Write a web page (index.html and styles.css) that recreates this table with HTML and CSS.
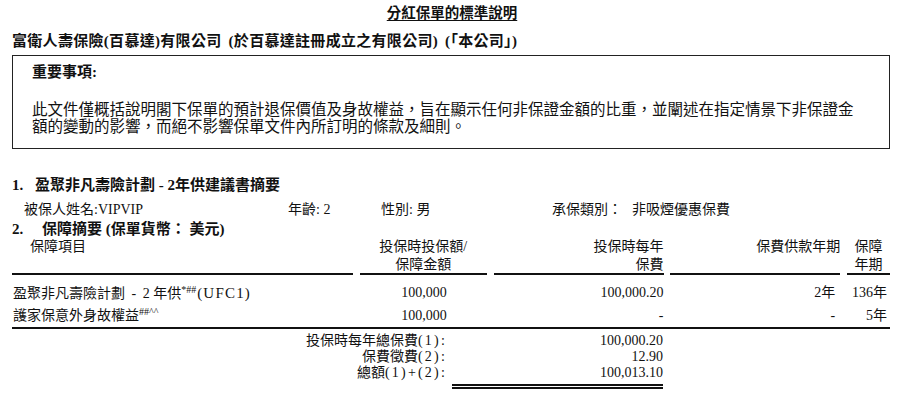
FILE: index.html
```html
<!DOCTYPE html>
<html lang="zh-Hant">
<head>
<meta charset="utf-8">
<link rel="stylesheet" href="styles.css">
</head>
<body>
<div class="page">
  <div class="title"><span class="title-text">分紅保單的標準說明</span></div>
  <div class="company">富衛人壽保險(百慕達)有限公司 (於百慕達註冊成立之有限公司) (「本公司」)</div>
  <div class="notice">
    <div class="notice-head">重要事項:</div>
    <p class="notice-body">此文件僅概括說明閣下保單的預計退保價值及身故權益，旨在顯示任何非保證金額的比重，並闡述在指定情景下非保證金<br>額的變動的影響，而絕不影響保單文件內所訂明的條款及細則。</p>
  </div>

  <div class="section sec1"><span class="num n1">1.</span>盈聚非凡壽險計劃 - 2年供建議書摘要</div>
  <div class="info">
    <span>被保人姓名:VIPVIP</span>
    <span>年齡: 2</span>
    <span>性別: 男</span>
    <span>承保類別：<span class="info-val">非吸煙優惠保費</span></span>
  </div>
  <div class="section sec2"><span class="num n2">2.</span>保障摘要 (保單貨幣： 美元)</div>

  <div class="grid head">
    <div class="c1 h1">保障項目</div>
    <div class="c2 h2">投保時投保額/<br>保障金額</div>
    <div class="c3 h3">投保時每年<br>保費</div>
    <div class="c4 h4">保費供款年期</div>
    <div class="c5 h5">保障<br>年期</div>
  </div>
  <div class="grid row first">
    <div class="d1">盈聚非凡壽險計劃 <span class="dash">-</span> 2 年供<sup>*##</sup><span class="code">(UFC1)</span></div>
    <div class="d2">100,000</div>
    <div class="d3">100,000.20</div>
    <div class="d4">2年</div>
    <div class="d5">136年</div>
  </div>
  <div class="grid row last">
    <div class="d1">護家保意外身故權益<sup>##^^</sup></div>
    <div class="d2">100,000</div>
    <div class="d3">-</div>
    <div class="d4">-</div>
    <div class="d5">5年</div>
  </div>

  <div class="totals">
    <div class="t-label">投保時每年總保費<span class="ref">(1):</span></div>
    <div class="t-value">100,000.20</div>
    <div class="t-label">保費徵費<span class="ref">(2):</span></div>
    <div class="t-value">12.90</div>
    <div class="t-label">總額<span class="ref">(1)+(2):</span></div>
    <div class="t-value grand">100,013.10</div>
  </div>
</div>
</body>
</html>
```

FILE: styles.css
```css
html, body {
  margin: 0;
  padding: 0;
  background: #fff;
}

body {
  font-family: "Liberation Serif", "Noto Sans CJK TC", serif;
  color: #111;
  font-size: 14px;
}

.page {
  width: 878px;
  padding-left: 12px;
}

.title {
  height: 26px;
  line-height: 26px;
  text-align: center;
  font-size: 14.5px;
  font-weight: bold;
  padding-left: 2px;
}

.title-text {
  text-decoration: underline;
  text-decoration-thickness: 1px;
  text-underline-offset: 2px;
}

.company {
  margin-top: 3px;
  line-height: 24px;
  font-size: 15px;
  font-weight: bold;
  letter-spacing: 0.3px;
  word-spacing: 3px;
}

.notice {
  margin-top: 2px;
  border: 1px solid #222;
  padding: 6px 20px 13px 19px;
}

.notice-head {
  line-height: 20px;
  font-size: 15px;
  font-weight: bold;
}

.notice-body {
  margin: 19px 0 0 0;
  font-size: 15.5px;
  line-height: 17px;
}

.section {
  font-size: 15px;
  font-weight: bold;
}

.sec1 {
  margin-top: 26px;
  line-height: 20px;
}

.sec2 {
  line-height: 18px;
}

.num {
  display: inline-block;
}

.n1 { width: 23px; }
.n2 { width: 30px; }

.dash {
  padding: 0 3px;
}

.info {
  margin-top: 5px;
  line-height: 20px;
  padding-left: 12px;
  display: grid;
  grid-template-columns: 264px 93px 171px auto;
}

.info-val {
  margin-left: 10px;
}

.grid {
  display: grid;
  grid-template-columns: 341px 127px 170px 170px 43px;
  column-gap: 6.75px;
}

.head {
  line-height: 17.5px;
}

.head > div {
  border-bottom: 2px solid #111;
}

.h1 { padding-left: 18px; }
.h2 { text-align: center; }
.h3 { text-align: right; }
.h4 { text-align: right; }
.h5 { text-align: center; }

.row {
  line-height: 22px;
}

.row.first {
  padding-top: 7px;
}

.row.last {
  border-bottom: 2px solid #111;
}

.d1 { padding-left: 1px; white-space: nowrap; }
.d2 { text-align: right; padding-right: 40px; }
.d3 { text-align: right; }
.d4 { text-align: right; padding-right: 5px; }
.d5 { text-align: right; padding-right: 3px; }

.code {
  letter-spacing: 1.2px;
  font-size: 15px;
}

sup {
  font-size: 10px;
  line-height: 0;
  vertical-align: 5px;
  margin-right: 1px;
}

.totals {
  display: grid;
  grid-template-columns: 438px 211px;
  column-gap: 2px;
  padding-top: 3.5px;
  line-height: 16px;
}

.t-label {
  text-align: right;
  padding-right: 3px;
}

.ref {
  letter-spacing: 2.2px;
}

.t-value {
  text-align: right;
}

.grand {
  padding-bottom: 3px;
  border-bottom: 5px double #111;
}
```
